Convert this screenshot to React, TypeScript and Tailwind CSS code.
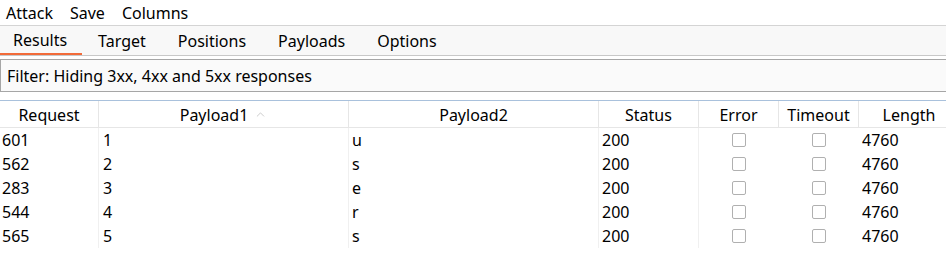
import { ChevronUp } from "lucide-react";

const columns = [
  { name: "Request", width: "w-[99px]" },
  { name: "Payload1", width: "w-[250px]", sorted: true },
  { name: "Payload2", width: "w-[250px]" },
  { name: "Status", width: "w-[100px]" },
  { name: "Error", width: "w-[80px]" },
  { name: "Timeout", width: "w-[80px]" },
  { name: "Length", width: "w-[100px] shrink-0" },
];

const rows = [
  { request: "601", p1: "1", p2: "u", status: "200", length: "4760" },
  { request: "562", p1: "2", p2: "s", status: "200", length: "4760" },
  { request: "283", p1: "3", p2: "e", status: "200", length: "4760" },
  { request: "544", p1: "4", p2: "r", status: "200", length: "4760" },
  { request: "565", p1: "5", p2: "s", status: "200", length: "4760" },
];

const tabs = ["Results", "Target", "Positions", "Payloads", "Options"];

const Checkbox = () => (
  <div className="h-[14px] w-[14px] rounded-[2px] border border-[#b0b0b0] bg-white" />
);

export default function App() {
  return (
    <div className="h-[269px] w-[946px] overflow-hidden bg-white text-[16px] leading-none text-black [font-family:'Noto_Sans',sans-serif]">
      {/* Menu bar */}
      <div className="flex h-[26px] items-center gap-[17px] border-b border-[#d4d4d4] px-[6px]">
        <span>Attack</span>
        <span>Save</span>
        <span>Columns</span>
      </div>

      {/* Tabs */}
      <div className="flex h-[30px] items-stretch border-b border-[#c8c8c8] bg-[#f8f8f8]">
        {tabs.map((tab, i) => (
          <div
            key={tab}
            className={
              i === 0
                ? "flex items-center border-b-2 border-[#f26b3a] pl-[13px] pr-[15px] pt-[1px]"
                : "flex items-center px-[16px] pt-[1px]"
            }
          >
            {tab}
          </div>
        ))}
      </div>

      {/* Filter */}
      <div className="mt-[3px] flex h-[33px] items-center border border-r-0 border-[#a6a6a6] bg-[#fafafa] px-[6px]">
        Filter: Hiding 3xx, 4xx and 5xx responses
      </div>

      {/* Table */}
      <div className="mt-[8px] overflow-hidden border-t border-[#a9c1dc]">
        <div className="flex h-[27px] w-[960px] border-b border-[#e6e6e6]">
          {columns.map((col, i) => (
            <div
              key={col.name}
              className={`${col.width} flex items-center justify-center gap-[6px] pt-[1px] ${
                i < columns.length - 1 ? "border-r border-[#e6e6e6]" : ""
              }`}
            >
              {col.name}
              {col.sorted && <ChevronUp size={13} strokeWidth={1.25} className="text-[#b4b4b4]" />}
            </div>
          ))}
        </div>
        {rows.map((row) => (
          <div key={row.request} className="flex h-[24px] w-[960px]">
            <div className="flex w-[99px] items-center border-r border-[#f0f0f0] pl-[2px]">{row.request}</div>
            <div className="flex w-[250px] items-center border-r border-[#f0f0f0] pl-[4px]">{row.p1}</div>
            <div className="flex w-[250px] items-center border-r border-[#f0f0f0] pl-[3px]">{row.p2}</div>
            <div className="flex w-[100px] items-center border-r border-[#f0f0f0] pl-[3px]">{row.status}</div>
            <div className="flex w-[80px] items-center justify-center">
              <Checkbox />
            </div>
            <div className="flex w-[80px] items-center justify-center">
              <Checkbox />
            </div>
            <div className="flex w-[100px] shrink-0 items-center pl-[3px]">{row.length}</div>
          </div>
        ))}
      </div>
    </div>
  );
}
